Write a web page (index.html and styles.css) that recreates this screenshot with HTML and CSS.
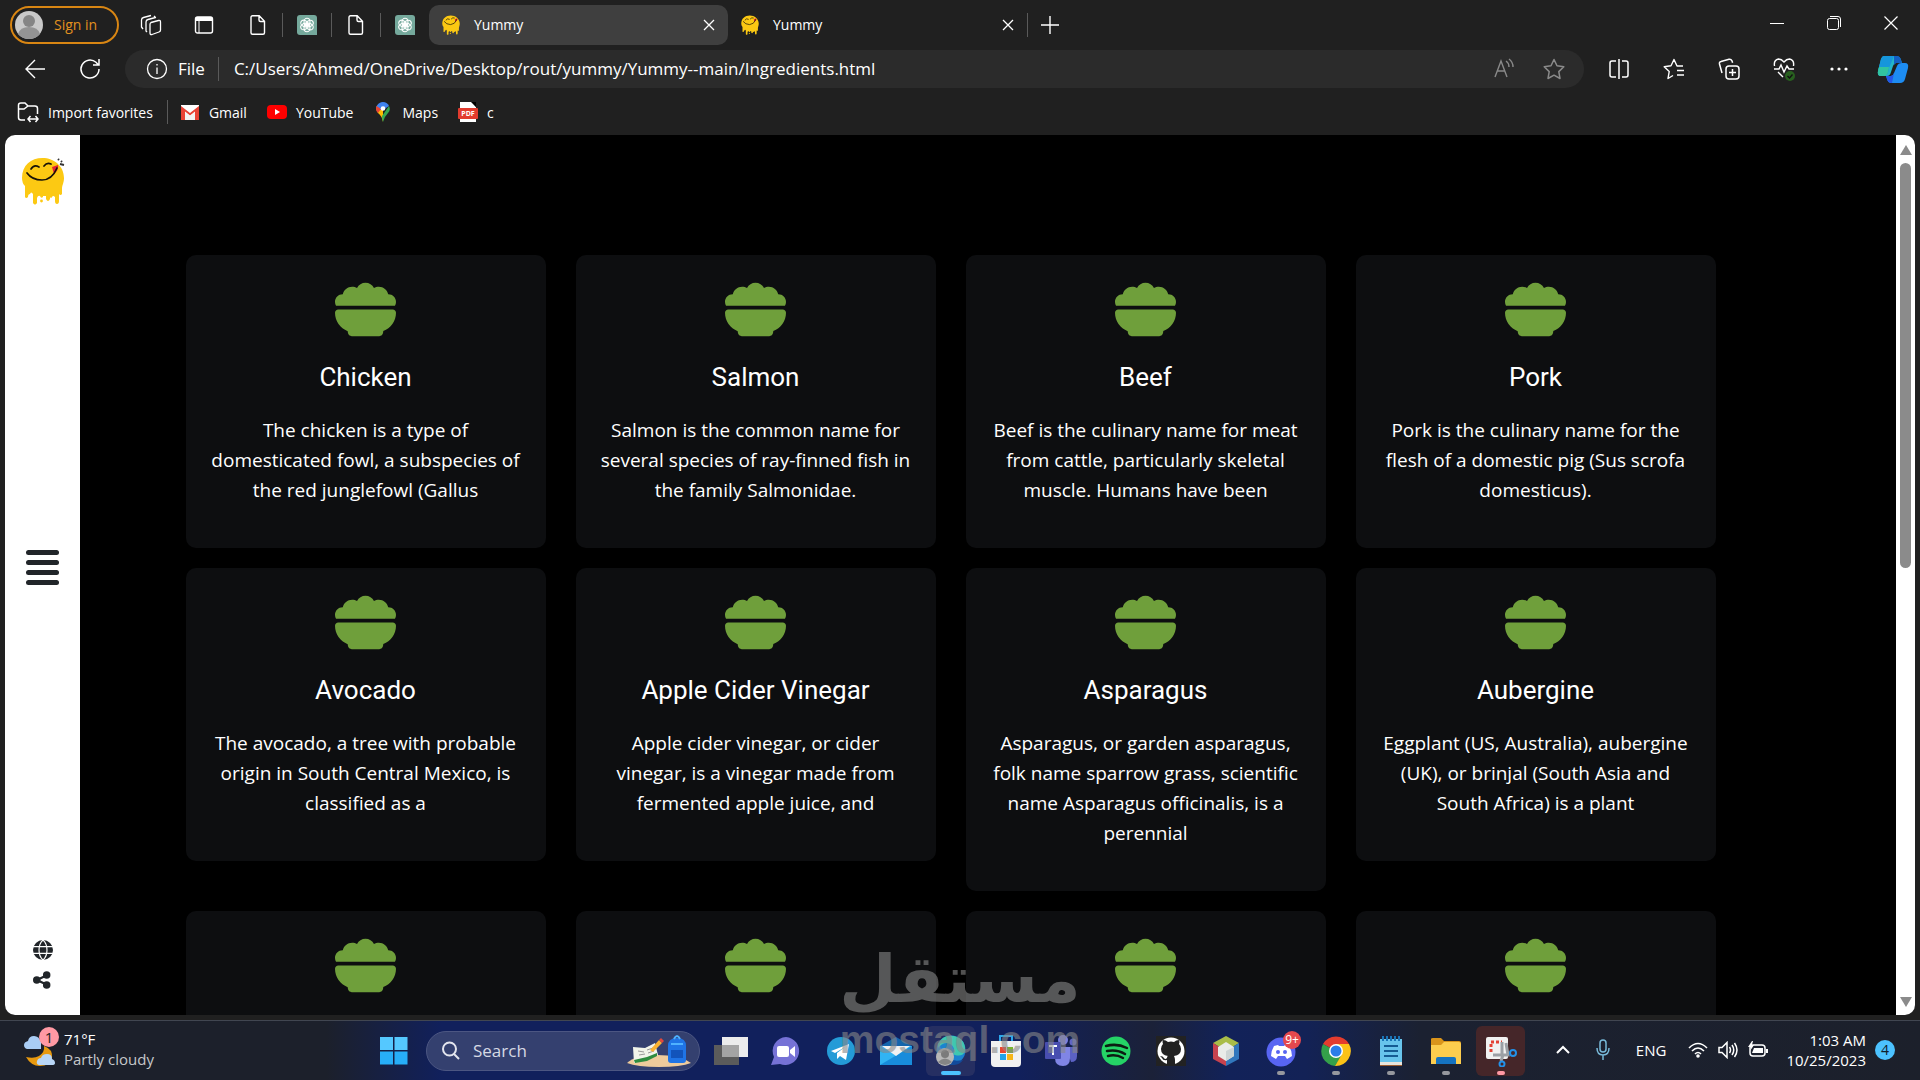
FILE: index.html
```
<!DOCTYPE html>
<html lang="en">

<head>
    <meta charset="UTF-8">
    <meta name="viewport" content="width=device-width, initial-scale=1.0">
    <link rel="stylesheet" href="styles.css">
    <title>Yummy</title>
</head>

<body>

    <!-- shared icons -->
    <svg class="sprite" aria-hidden="true">
        <symbol id="file" viewBox="0 0 20 20"><path d="M4.500 .8h6.700l5.300 5.400v11.500q0 1.500-1.500 1.500H4.500Q3 19.200 3 17.700V2.300Q3 .8 4.500 .8zM11 1v4q0 1.500 1.500 1.500h4" fill="none" stroke="#fff" stroke-width="1.400"/></symbol>
        <symbol id="gpt" viewBox="0 0 20 20"><path d="M3 0h14q3 0 3 3v17H3q-3 0-3-3V3q0-3 3-3z" fill="#75a99c"/><g fill="none" stroke="#fff" stroke-width="1.100"><ellipse cx="10" cy="7" rx="3" ry="3.800"/><ellipse cx="10" cy="7" rx="3" ry="3.800" transform="rotate(60 10 10)"/><ellipse cx="10" cy="7" rx="3" ry="3.800" transform="rotate(120 10 10)"/><ellipse cx="10" cy="7" rx="3" ry="3.800" transform="rotate(180 10 10)"/><ellipse cx="10" cy="7" rx="3" ry="3.800" transform="rotate(240 10 10)"/><ellipse cx="10" cy="7" rx="3" ry="3.800" transform="rotate(300 10 10)"/></g></symbol>
        <symbol id="yummy" viewBox="0 0 44 48"><path d="M1 21C1 8 10 1 21.500 1S43 9 43 21c0 5-2 7-2 11v5q-1.500 2-3 0v7q0 3-2 3t-2-3v-4q-2-2-3 0-1 2-2 0v2q-2 4-4 0v-3h-3v1q-2 2-3-1-2-1-3 2v5q-2 3-4 0v-9q-2-3-3 0-2 0-2 3-2 2-3 0V29Q1 26 1 21z" fill="#fcc913"/><circle cx="20.500" cy="44" r="1.400" fill="#fcc913"/><path d="M31 10l6-2q1 5-4 9z" fill="#e62332"/><path d="M6 16q5 7 15 7t15-12M10 12q3-5 8-2M23 9q3-4 7-2" fill="none" stroke="#171208" stroke-width="1.700" stroke-linecap="round"/><path d="M37 2l1 1M40 4l1 1M39 7l4 1" stroke="#333" stroke-width="2"/></symbol>
        <symbol id="close" viewBox="0 0 14 14"><path d="M2 2l10 10M12 2L2 12" stroke="#fff" stroke-width="1.300"/></symbol>
        <symbol id="bowl" viewBox="0 0 512 512"><path fill="#6f9f3b" d="M0 192c0-35.300 28.700-64 64-64h1.600C73 91.500 105.300 64 144 64c15 0 29 4.100 40.900 11.200C198.200 49.600 225.100 32 256 32s57.800 17.600 71.100 43.200C339 68.100 353 64 368 64c38.700 0 71 27.500 78.400 64h1.600c35.300 0 64 28.700 64 64 0 11.700-3.100 22.600-8.600 32H8.600C3.100 214.600 0 203.700 0 192zm0 91.400C0 268.300 12.300 256 27.400 256h457.200c15.100 0 27.400 12.300 27.400 27.400 0 70.500-44.400 130.700-106.700 154.100L403.500 452c-2 16-15.600 28-31.800 28H140.200c-16.100 0-29.800-12-31.800-28l-1.800-14.400C44.400 414.100 0 353.900 0 283.400z"/></symbol>
    </svg>

    <div class="browser">
        <header class="tabs">
            <button class="sign_in">
                <svg width="30" height="30" viewBox="0 0 30 30"><circle cx="15" cy="15" r="14" fill="#c9c9c9"/><circle cx="15" cy="11" r="6" fill="#858585"/><path d="M4 24q2-7 11-7t11 7q-4 5-11 5T4 24z" fill="#949494"/></svg>
                <span>Sign in</span>
            </button>
            <button class="icon_btn workspaces" aria-label="Workspaces"><svg width="22" height="22" viewBox="0 0 22 22" fill="none" stroke="#fff" stroke-width="1.300" stroke-linejoin="round"><path d="M11 8.500l7.500-2q2-.5 2 1.500v8q0 1.500-1.500 2l-7 2.500q-2 .5-2-1.500v-8.500q0-1.500 1-2zM7 18l-1-1V8q0-2 2-2.500L15.500 3.500 14 2M3 15l-1.500-2V6q0-2 2-2.500L11 1.500"/></svg></button>
            <button class="icon_btn tab_menu" aria-label="Tab actions"><svg width="20" height="20" viewBox="0 0 20 20"><rect x="1.500" y="2" width="17" height="16" rx="2" fill="none" stroke="#fff" stroke-width="1.400"/><path d="M2 2h16v4H2z" fill="#fff"/><path d="M5 6v12" stroke="#fff"/></svg></button>
            <div class="pinned">
                <button class="icon_btn" aria-label="File"><svg width="20" height="20"><use href="#file"/></svg></button>
                <i class="line"></i>
                <button class="icon_btn" aria-label="ChatGPT"><svg width="20" height="20"><use href="#gpt"/></svg></button>
                <i class="line"></i>
                <button class="icon_btn" aria-label="File"><svg width="20" height="20"><use href="#file"/></svg></button>
                <i class="line"></i>
                <button class="icon_btn" aria-label="ChatGPT"><svg width="20" height="20"><use href="#gpt"/></svg></button>
            </div>
            <div class="tab active">
                <svg width="20" height="20"><use href="#yummy"/></svg>
                <span>Yummy</span>
                <button class="icon_btn" aria-label="Close tab"><svg width="14" height="14"><use href="#close"/></svg></button>
            </div>
            <div class="tab">
                <svg width="20" height="20"><use href="#yummy"/></svg>
                <span>Yummy</span>
                <button class="icon_btn" aria-label="Close tab"><svg width="14" height="14"><use href="#close"/></svg></button>
            </div>
            <i class="line"></i>
            <button class="icon_btn new_tab" aria-label="New tab"><svg width="20" height="20" viewBox="0 0 20 20"><path d="M1 10h18M10 1v18" stroke="#fff" stroke-width="1.400"/></svg></button>
            <div class="window_btns">
                <button class="icon_btn" aria-label="Minimize"><svg width="14" height="14"><path d="M0 7.500h14" stroke="#fff"/></svg></button>
                <button class="icon_btn" aria-label="Restore"><svg width="14" height="14" fill="none" stroke="#fff"><rect x=".5" y="2.500" width="11" height="11" rx="2"/><path d="M3 .5h8q2.500 0 2.500 2.500v8"/></svg></button>
                <button class="icon_btn" aria-label="Close"><svg width="14" height="14"><path d="M.5 .5l13 13M13.500 .5l-13 13" stroke="#fff" stroke-width="1.200"/></svg></button>
            </div>
        </header>

        <div class="toolbar">
            <button class="icon_btn back" aria-label="Back"><svg width="22" height="20" viewBox="0 0 22 20" fill="none" stroke="#fff" stroke-width="1.400"><path d="M21 10H2M11 1L2 10l9 9"/></svg></button>
            <button class="icon_btn refresh" aria-label="Refresh"><svg width="22" height="22" viewBox="0 0 22 22" fill="none" stroke="#fff" stroke-width="1.500"><path d="M20 11a9 9 0 1 1-3-6.700L19.500 7M20 1v6h-6"/></svg></button>
            <div class="address">
                <svg width="22" height="22" viewBox="0 0 22 22" fill="none" stroke="#fff" stroke-width="1.300"><circle cx="11" cy="11" r="9.500"/><path d="M11 9.500V16M11 6v1.600"/></svg>
                <label for="url">File</label>
                <i class="line"></i>
                <input id="url" type="text" value="C:/Users/Ahmed/OneDrive/Desktop/rout/yummy/Yummy--main/Ingredients.html">
                <button class="icon_btn" aria-label="Read aloud"><svg width="22" height="22" viewBox="0 0 22 22" fill="none" stroke="#8a8a8a" stroke-width="1.400"><path d="M2 19L8 3l6 16M4 13h8M13 3q3 2 3 6M16 1q4 3 4 8"/></svg></button>
                <button class="icon_btn" aria-label="Add to favorites"><svg width="22" height="22" viewBox="0 0 22 22" fill="none" stroke="#8a8a8a" stroke-width="1.500" stroke-linejoin="round"><path d="M11 1.500l3 6.300 6.800 1-5 4.800 1.200 6.900-6-3.300-6 3.300 1.200-6.900-5-4.800 6.800-1z"/></svg></button>
            </div>
            <div class="tools">
                <button class="icon_btn" aria-label="Split screen"><svg width="22" height="22" viewBox="0 0 22 22" fill="none" stroke="#fff" stroke-width="1.500"><path d="M8 3H4Q2 3 2 5v12q0 2 2 2h4M14 3h4q2 0 2 2v12q0 2-2 2h-4M11 1v20"/></svg></button>
                <button class="icon_btn" aria-label="Favorites"><svg width="22" height="22" viewBox="0 0 22 22" fill="none" stroke="#fff" stroke-width="1.400" stroke-linejoin="round"><path d="M20 8h-6l-3-6.500-3 6.300-6.800 1 5 4.800L5 20.500l5-3M14 12.500h7M14 17h7"/></svg></button>
                <button class="icon_btn" aria-label="Collections"><svg width="22" height="22" viewBox="0 0 22 22" fill="none" stroke="#fff" stroke-width="1.500"><rect x="8" y="8" width="13" height="13" rx="3"/><path d="M14.500 11v7M11 14.500h7M4 15L1.500 6Q1 4 3 3.500l8-2.200q2-.4 3 1.500l.6 2"/></svg></button>
                <button class="icon_btn" aria-label="Browser essentials"><svg width="22" height="24" viewBox="0 0 22 24" fill="none" stroke="#fff" stroke-width="1.400"><path d="M1.500 9Q.5 3 5.500 2q3 0 5.500 3 2.500-3 5.500-3 5 1 4 7M1 12h5l2-4 3 7 3-6 2 3h5M5 15l5 5"/><circle cx="17" cy="19" r="5" fill="#28601f" stroke="none"/><path d="M14.500 19l2 2 3-3.500" stroke="#111"/></svg></button>
                <button class="icon_btn" aria-label="More"><svg width="22" height="22" viewBox="0 0 22 22" fill="#fff"><circle cx="4" cy="11" r="1.600"/><circle cx="11" cy="11" r="1.600"/><circle cx="18" cy="11" r="1.600"/></svg></button>
                <button class="icon_btn" aria-label="Copilot"><svg width="32" height="30" viewBox="0 0 32 30"><path d="M7 2h12q4 0 5 4l1 3h-6q-2 0-3 3l-2 6q-1 4-4 4H4q-4 0-3-5L4 5q1-3 3-3z" fill="#23b5c9"/><path d="M7 2h10L12 14q-1 8-4 8H4q-4 0-3-5L4 5q1-3 3-3z" fill="#1696dc"/><path d="M2 13h10l-1 5q-1 4-4 4H4q-4 0-3-5z" fill="#31c4a0"/><path d="M17 2h3q3 0 4 4l1 3h-6l-2 2z" fill="#125fc4"/><path d="M25 9h3q4 0 3 5l-3 11q-1 4-5 4H14q-3 0-4-4l-1-3h5q2 0 3-3l3-7q1-3 5-3z" fill="#1d8cf2"/><path d="M9 22h5q2 0 3-3l-2 10q-4 0-5-4z" fill="#2456e8"/></svg></button>
            </div>
        </div>

        <nav class="favorites">
            <a href="#"><svg width="22" height="22" viewBox="0 0 22 22" fill="none" stroke="#fff" stroke-width="1.500"><path d="M8 19H4q-2.500 0-2.500-2.500V4Q1.500 2 4 2h4l3 3h7q2.500 0 2.500 2.500V13M2 8h5l4-3M11 18h10M13.500 15L11 18l2.500 3M18.500 15l2.500 3-2.500 3"/></svg>Import favorites</a>
            <i class="line"></i>
            <a href="#"><svg width="20" height="20" viewBox="0 0 20 20"><path d="M1 3h18v15H1z" fill="#fff"/><path d="M1 18V4l9 7 9-7v14h-4V9.500L10 13.500 5 9.500V18z" fill="#e94235"/><path d="M5 10v8h10v-8l-5 4z" fill="#f3f3f3"/></svg>Gmail</a>
            <a href="#"><svg width="20" height="20" viewBox="0 0 20 20"><rect y="3" width="20" height="14" rx="4" fill="#f00"/><path d="M8 7l5 3-5 3z" fill="#fff"/></svg>YouTube</a>
            <a href="#"><svg width="20" height="20" viewBox="0 0 20 20"><path d="M10 20Q9 14 5 11 2 7 4 3.500L10 7z" fill="#fbbc04"/><path d="M4 3.500Q6 0 10 0t6 4l-6 4-6 0q-1-2 0-4.500z" fill="#3f83f0"/><path d="M16 4q2 4-1 7-4 4-5 9-1-3-1-6z" fill="#34a853"/><path d="M3.500 4L8 7l-3 4Q2 8 3.500 4z" fill="#ea4335"/><circle cx="10" cy="6.500" r="2.300" fill="#fff"/></svg>Maps</a>
            <a href="#"><svg width="20" height="20" viewBox="0 0 20 20"><path d="M2 0h12l4 5v15H2z" fill="#fff"/><path d="M13 0l5 5v-5z" fill="#000"/><rect y="6" width="20" height="11" rx="1" fill="#e23b2e"/><text x="10" y="14" class="pdf">PDF</text></svg>c</a>
        </nav>

        <div class="page">
            <aside class="side_nav">
                <a href="#" class="logo" aria-label="Yummy"><svg width="46" height="48"><use href="#yummy"/></svg></a>
                <button class="menu" aria-label="Open menu"><i></i><i></i><i></i><i></i></button>
                <div class="social">
                    <a href="#" aria-label="Website"><svg width="20" height="20" viewBox="0 0 512 512" fill="#212529"><circle cx="256" cy="256" r="256"/><path fill="none" stroke="#fff" stroke-width="30" d="M0 168h512M0 344h512M256 0C120 120 120 392 256 512M256 0c136 120 136 392 0 512"/></svg></a>
                    <a href="#" aria-label="Share"><svg width="20" height="20" viewBox="0 0 512 512"><path d="M370 130L100 256l270 126" fill="none" stroke="#212529" stroke-width="58"/><g fill="#212529"><circle cx="350" cy="128" r="96"/><circle cx="96" cy="256" r="96"/><circle cx="350" cy="384" r="96"/></g></svg></a>
                </div>
            </aside>

            <main class="main">
                <div class="items">
                    <div class="card">
                        <svg class="bowl"><use href="#bowl"/></svg>
                        <h3>Chicken</h3>
                        <p>The chicken is a type of domesticated fowl, a subspecies of the red junglefowl (Gallus</p>
                    </div>
                    <div class="card">
                        <svg class="bowl"><use href="#bowl"/></svg>
                        <h3>Salmon</h3>
                        <p>Salmon is the common name for several species of ray-finned fish in the family Salmonidae.</p>
                    </div>
                    <div class="card">
                        <svg class="bowl"><use href="#bowl"/></svg>
                        <h3>Beef</h3>
                        <p>Beef is the culinary name for meat from cattle, particularly skeletal muscle. Humans have been</p>
                    </div>
                    <div class="card">
                        <svg class="bowl"><use href="#bowl"/></svg>
                        <h3>Pork</h3>
                        <p>Pork is the culinary name for the flesh of a domestic pig (Sus scrofa domesticus).</p>
                    </div>
                    <div class="card">
                        <svg class="bowl"><use href="#bowl"/></svg>
                        <h3>Avocado</h3>
                        <p>The avocado, a tree with probable origin in South Central Mexico, is classified as a</p>
                    </div>
                    <div class="card">
                        <svg class="bowl"><use href="#bowl"/></svg>
                        <h3>Apple Cider Vinegar</h3>
                        <p>Apple cider vinegar, or cider vinegar, is a vinegar made from fermented apple juice, and</p>
                    </div>
                    <div class="card">
                        <svg class="bowl"><use href="#bowl"/></svg>
                        <h3>Asparagus</h3>
                        <p>Asparagus, or garden asparagus, folk name sparrow grass, scientific name Asparagus officinalis, is a perennial</p>
                    </div>
                    <div class="card">
                        <svg class="bowl"><use href="#bowl"/></svg>
                        <h3>Aubergine</h3>
                        <p>Eggplant (US, Australia), aubergine (UK), or brinjal (South Asia and South Africa) is a plant</p>
                    </div>
                    <div class="card"><svg class="bowl"><use href="#bowl"/></svg></div>
                    <div class="card"><svg class="bowl"><use href="#bowl"/></svg></div>
                    <div class="card"><svg class="bowl"><use href="#bowl"/></svg></div>
                    <div class="card"><svg class="bowl"><use href="#bowl"/></svg></div>
                </div>
            </main>

            <div class="scrollbar">
                <svg width="12" height="10"><path d="M6 0l6 10H0z" fill="#8b8b8b"/></svg>
                <div class="track"><div class="thumb"></div></div>
                <svg width="12" height="10"><path d="M0 0h12L6 10z" fill="#8b8b8b"/></svg>
            </div>
        </div>
    </div>

    <footer class="taskbar">
        <div class="weather">
            <svg width="34" height="36" viewBox="0 0 34 36"><path d="M3 18q-3-1-3-4t4-4q1-5 6-5t7 6v7z" fill="#a9cdf5"/><path d="M2 26q8 2 13-1 6-4 5-10 9 3 8 12-2 8-12 8-9 0-14-9z" fill="#e8990f"/><path d="M15 34q-3-1-2-4 1-3 4-3 1-4 6-4t5 5q3 1 3 4 0 2-3 2z" fill="#b8d6f7"/></svg>
            <b>1</b>
            <div>
                <p>71°F</p>
                <p class="muted">Partly cloudy</p>
            </div>
        </div>

        <div class="apps">
            <button aria-label="Start"><svg width="30" height="30" viewBox="0 0 30 30"><path d="M1 1h13v13H1zM15.500 1h13v13h-13z" fill="#55c8ff"/><path d="M1 15.500h13v13H1zM15.500 15.500h13v13h-13z" fill="#27aef8"/></svg></button>
            <div class="search">
                <svg width="20" height="20" viewBox="0 0 20 20" fill="none" stroke="#e3e5ee" stroke-width="2"><circle cx="8.500" cy="8" r="6.500"/><path d="M13 13l5 5"/></svg>
                <input type="text" placeholder="Search" aria-label="Search">
                <svg width="66" height="32" viewBox="0 0 66 32"><path d="M1 28q8-8 30-8t34 8q-10 4-32 4T1 28z" fill="#eecb9c"/><path d="M7 12l12 1 10-5 3 12-11 5-13 3z" fill="#f1f4ea"/><path d="M8 25l13-3 10-4v3l-10 5-12 2z" fill="#2e8c3f"/><path d="M12 16l6 1M13 20l6-1M21 15l6-2M22 18l6-2" stroke="#999"/><path d="M24 15L33 5l3 3-9 9z" fill="#f9b233"/><path d="M33 5l2-2 3 3-2 2z" fill="#e2483d"/><path d="M42 11q0-8 9-8t9 8v14q0 3-3 3H45q-3 0-3-3z" fill="#1f74e6"/><path d="M45 15h12v8H45z" fill="#1254bb"/><path d="M45 9h12M48 4q3-6 6 0" stroke="#4fb2ff" stroke-width="2" fill="none"/></svg>
            </div>
            <button aria-label="Task view"><svg width="36" height="32" viewBox="0 0 36 32"><path d="M1 10h25v20H1z" fill="#5b5b5b"/><path d="M9 2h26v20H9z" fill="#ececec"/><path d="M9 10h17v12H9z" fill="#a4a4a4"/></svg></button>
            <button aria-label="Chat"><svg width="32" height="32" viewBox="0 0 32 32"><path d="M16 2a14 14 0 1 1-6 27l-9 1 3-8A14 14 0 0 1 16 2z" fill="#7672d6"/><rect x="7" y="11" width="12" height="11" rx="2" fill="#fff"/><path d="M20 15l5-4v11l-5-4z" fill="#fff"/></svg></button>
            <button aria-label="Telegram"><svg width="32" height="32" viewBox="0 0 32 32"><circle cx="16" cy="16" r="14" fill="#249bd7"/><path d="M6 16l18-7-3 16-6-4-3 3v-6l8-6-10 6z" fill="#fff"/></svg></button>
            <button aria-label="Mail"><svg width="34" height="32" viewBox="0 0 34 32"><path d="M1 11L17 2l16 9z" fill="#1465ad"/><path d="M1 11h32v19H1z" fill="#31b4f3"/><path d="M1 30L33 11v19z" fill="#188cdb"/><path d="M3 11h28l-14 10z" fill="#f1f1f1"/></svg></button>
            <button class="open current" aria-label="Edge"><svg width="34" height="34" viewBox="0 0 34 34"><circle cx="17" cy="16" r="14.500" fill="#1c83cf"/><path d="M4 10Q9 0 20 2q12 3 11 15-2 6-10 4-3-1-1-4 0-7-7-8-5 0-9 5z" fill="#3fc7b0"/><path d="M14 18q-1 11 15 8-5 7-14 4z" fill="#124a9b"/><circle cx="11" cy="23" r="9" fill="#b7b7b7"/><circle cx="11" cy="20" r="4" fill="#7b7b7b"/><path d="M4 28q7-7 14 0-7 6-14 0z" fill="#858585"/></svg></button>
            <button aria-label="Store"><svg width="32" height="34" viewBox="0 0 32 34"><path d="M10 8V2h12v6" fill="none" stroke="#2da7ec" stroke-width="2"/><path d="M1 7h30v22q0 4-4 4H5q-4 0-4-4z" fill="#f1f1f1"/><path d="M10 13h6v6h-6z" fill="#e8482e"/><path d="M17 13h6v6h-6z" fill="#78b52e"/><path d="M10 20h6v6h-6z" fill="#23a3e7"/><path d="M17 20h6v6h-6z" fill="#f6b518"/></svg></button>
            <button aria-label="Teams"><svg width="34" height="34" viewBox="0 0 34 34"><circle cx="19" cy="6" r="5" fill="#7b80e0"/><circle cx="29" cy="8" r="3.500" fill="#6065c6"/><path d="M22 13h11v9q0 6-6 6z" fill="#5b61c4"/><path d="M11 13h15v11q0 8-7 8-8 0-8-8z" fill="#8085e5"/><rect x="1" y="8" width="16" height="17" rx="1" fill="#484eb0"/><path d="M5 12h8M9 12v9" stroke="#fff" stroke-width="2"/></svg></button>
            <button aria-label="Spotify"><svg width="32" height="32" viewBox="0 0 32 32"><circle cx="16" cy="16" r="14.500" fill="#25d366"/><path d="M6 11q11-3 21 2M7 16q10-2 18 3M8 21q8-2 15 2" fill="none" stroke="#0c1c12" stroke-width="2.500" stroke-linecap="round"/></svg></button>
            <button aria-label="GitHub"><svg width="32" height="32" viewBox="0 0 32 32"><path d="M1 1h30v30H1z" fill="#222"/><circle cx="16" cy="16" r="13.500" fill="#fff"/><path d="M12 30v-5q-4 1-5-2l-2-2q3 0 4 2 1 2 3 0 0-2 1-2-7-1-7-7 0-3 2-5-1-2 0-4 3 0 5 2 3-1 6 0 2-2 5-2 1 2 0 4 2 2 2 5 0 6-7 7 1 2 1 4v5z" fill="#222"/></svg></button>
            <button aria-label="NetBeans"><svg width="30" height="32" viewBox="0 0 30 32"><path d="M15 1l13 7-13 8L2 8z" fill="#a9bd49"/><path d="M2 8l13 8v15L2 24z" fill="#c7424e"/><path d="M28 8l-13 8v15l13-7z" fill="#3177bd"/><path d="M15 7l8 5v9l-8 5-8-5v-9z" fill="#e9ece9"/><path d="M15 16l8-4v9l-8 5z" fill="#cdd5d5"/></svg></button>
            <button class="open" aria-label="Discord"><svg width="32" height="32" viewBox="0 0 32 32"><circle cx="16" cy="17" r="14.500" fill="#5865f2"/><path d="M9 11l4-1 1 1h5l1-1 4 1q3 5 3 10-3 2-5 3l-2-3h-7l-2 3-5-3q0-5 3-10z" fill="#fff"/><circle cx="13" cy="17" r="2" fill="#5865f2"/><circle cx="20" cy="17" r="2" fill="#5865f2"/></svg><b>9+</b></button>
            <button class="open" aria-label="Chrome"><svg width="32" height="32" viewBox="0 0 32 32"><path d="M16 16L3 9a15 15 0 0 1 26 0z" fill="#e43c2e"/><path d="M16 16L3 9a15 15 0 0 0 12 22l7-11z" fill="#34a04a"/><path d="M16 9h13a15 15 0 0 1-14 22l7-12z" fill="#fbc217"/><circle cx="16" cy="16" r="7" fill="#fff"/><circle cx="16" cy="16" r="5.500" fill="#2b7de9"/></svg></button>
            <button class="open" aria-label="Notepad"><svg width="26" height="32" viewBox="0 0 26 32"><path d="M2 4h22v25H2z" fill="#68c4ec"/><path d="M2 27h22v3H2z" fill="#e8e4dc"/><path d="M2 30h22v1H2z" fill="#9c5c2f"/><path d="M6 11h14M6 16h14M6 21h14" stroke="#155b93" stroke-width="2"/><path d="M5 1v5M9 1v5M13 1v5M17 1v5M21 1v5" stroke="#1a75b8" stroke-width="2"/></svg></button>
            <button class="open" aria-label="File Explorer"><svg width="32" height="32" viewBox="0 0 32 32"><path d="M1 4q0-1 2-1h8l3 3h15q2 0 2 2v7H1z" fill="#d9941b"/><path d="M1 10h10l3-3h15q2 0 2 2v20H1z" fill="#fccd4e"/><path d="M6 29v-5q0-2 2-2h16q2 0 2 2v5z" fill="#1573c0"/></svg></button>
            <button class="open snip" aria-label="Snipping Tool"><svg width="32" height="32" viewBox="0 0 32 32"><rect x="1" y="2" width="22" height="22" rx="2" fill="#f1f1f1"/><path d="M6 17V7h11" fill="none" stroke="#e34234" stroke-width="3" stroke-dasharray="3 2"/><path d="M17 7v14M8 20h15l-2-12M18 20l-2 6" fill="none" stroke="#9ca0a5" stroke-width="3"/><circle cx="28" cy="18" r="3" fill="none" stroke="#2391e8" stroke-width="2"/><circle cx="17" cy="29" r="2.500" fill="none" stroke="#2391e8" stroke-width="2"/></svg></button>
        </div>

        <div class="tray">
            <button aria-label="Hidden icons"><svg width="14" height="10"><path d="M1 8l6-6 6 6" fill="none" stroke="#fff" stroke-width="2"/></svg></button>
            <button aria-label="Microphone"><svg width="14" height="22" fill="none" stroke="#78b9d9" stroke-width="1.500"><rect x="4" y="1" width="6" height="12" rx="3"/><path d="M1 9q0 7 6 7t6-7M7 16v5"/></svg></button>
            <button class="lang">ENG</button>
            <button class="status" aria-label="Network, volume and battery">
                <svg width="20" height="18" fill="none" stroke="#fff" stroke-width="1.600"><path d="M1 7q9-9 18 0M4 10q6-6 12 0M7 13q3-3 6 0"/><circle cx="10" cy="15" r="1" fill="#fff"/></svg>
                <svg width="20" height="18" fill="none" stroke="#fff" stroke-width="1.500"><path d="M1 6.500h3l5-5v15l-5-5H1zM11.500 6q2 3 0 6M14 4q3.500 5 0 10M16.500 2q5 7 0 14"/></svg>
                <svg width="20" height="18"><rect x="2" y="4" width="15" height="11" rx="3" fill="none" stroke="#fff" stroke-width="1.500"/><path d="M6 7h9v5H4zM18 8h2v4h-2z" fill="#fff"/><path d="M4 0L0 6h3l-1 4 4-6H4l1-4z" fill="#fff"/></svg>
            </button>
            <div class="clock">
                <p>1:03 AM</p>
                <p>10/25/2023</p>
            </div>
            <span class="notes">4</span>
        </div>
    </footer>

    <div class="watermark">
        <span class="arabic" lang="ar" dir="rtl">مستقل</span>
        <span class="latin">mostaql.com</span>
    </div>

</body>

</html>
```
FILE: styles.css
```
* {
    margin: 0px;
    padding: 0px;
    box-sizing: border-box;
}

body {
    height: 100vh;
    display: flex;
    flex-direction: column;
    overflow: hidden;
    background: #202020;
    color: #ffffff;
    font-family: "Open Sans", "Noto Sans", sans-serif;
    font-size: 14px;
}

a {
    color: inherit;
    text-decoration: none;
}

button,
input {
    border: none;
    outline: none;
    background: none;
    color: inherit;
    font: inherit;
}

svg {
    display: block;
    flex: none;
}

.sprite {
    position: absolute;
    width: 0px;
    height: 0px;
}

.icon_btn {
    display: flex;
    align-items: center;
    justify-content: center;
    flex: none;
}

.line {
    width: 1px;
    height: 24px;
    background: #5a5a5a;
    flex: none;
}

/* browser */
.browser {
    flex: 1;
    min-height: 0px;
    display: flex;
    flex-direction: column;
    padding: 0px 5px 5px;
}

.tabs {
    height: 50px;
    display: flex;
    align-items: center;
    padding-left: 5px;
}

.sign_in {
    display: flex;
    align-items: center;
    gap: 10px;
    width: 109px;
    height: 38px;
    padding-left: 2px;
    border: 2px solid #d98613;
    border-radius: 19px;
    color: #e2901f;
}

.sign_in span,
.tab span {
    padding-bottom: 2px;
}

.workspaces {
    margin-left: 21px;
}

.tab_menu {
    margin-left: 32px;
}

.pinned {
    display: flex;
    align-items: center;
    gap: 14px;
    margin: 0px 14px 0px 34px;
}

.tab {
    width: 299px;
    height: 40px;
    display: flex;
    align-items: center;
    gap: 13px;
    padding: 0px 12px;
    border-radius: 10px;
}

.tab.active {
    background: #3f3f3f;
}

.tab .icon_btn {
    margin-left: auto;
}

.new_tab {
    margin-left: 12px;
}

.window_btns {
    display: flex;
    gap: 43px;
    margin-left: auto;
    padding: 0px 17px 4px 0px;
}

.toolbar {
    display: flex;
    align-items: center;
    height: 38px;
}

.back {
    margin-left: 19px;
}

.refresh {
    margin: 0px 24px 0px 33px;
}

.address {
    flex: 1;
    display: flex;
    align-items: center;
    height: 38px;
    padding: 0px 19px 0px 21px;
    border-radius: 19px;
    background: #2b2b2b;
    font-size: 17px;
}

.address label,
.address input {
    padding-bottom: 2px;
}

.address label {
    margin: 0px 13px 0px 10px;
}

.address input {
    flex: 1;
    min-width: 0px;
    margin-left: 15px;
}

.address .icon_btn {
    margin-left: 28px;
}

.tools {
    display: flex;
    align-items: center;
    gap: 33px;
    padding: 0px 6px 0px 24px;
}

.tools .icon_btn:last-child {
    margin-left: -6px;
}

.favorites {
    height: 47px;
    display: flex;
    align-items: center;
    gap: 20px;
    padding: 1px 0px 0px 12px;
}

.favorites a {
    display: flex;
    align-items: center;
    gap: 9px;
}

.favorites .line {
    margin: 0px -8px 0px -6px;
}

.pdf {
    fill: #ffffff;
    font-size: 7px;
    font-weight: 700;
    text-anchor: middle;
}

/* page */
.page {
    flex: 1;
    min-height: 0px;
    display: flex;
    position: relative;
    border-radius: 10px;
    overflow: hidden;
    background: #000000;
}

.side_nav {
    position: absolute;
    top: 0px;
    bottom: 0px;
    left: 0px;
    width: 75px;
    display: flex;
    flex-direction: column;
    align-items: center;
    justify-content: space-between;
    padding: 22px 0px 25px;
    background: #ffffff;
}

.logo {
    height: 48px;
}

.menu {
    width: 33px;
    display: flex;
    flex-direction: column;
    gap: 5px;
    margin-bottom: 10px;
}

.menu i {
    height: 5px;
    border-radius: 3px;
    background: #212529;
}

.social {
    display: flex;
    flex-direction: column;
    gap: 10px;
}

.main {
    flex: 1;
    padding: 120px 0px 0px;
    overflow: hidden;
}

.items {
    max-width: 1530px;
    margin: 0px auto;
    display: grid;
    grid-template-columns: repeat(4, 1fr);
    align-items: start;
    gap: 20px 30px;
}

.card {
    min-height: 293px;
    padding: 24px 20px 43px;
    border-radius: 10px;
    background: #0d0e10;
    text-align: center;
}

.bowl {
    width: 61px;
    height: 61px;
    margin: 0px auto;
}

.card h3 {
    margin: 20px 0px 21px;
    font-family: Roboto, sans-serif;
    font-size: 26px;
    font-weight: 400;
    line-height: 34px;
}

.card p {
    font-size: 19px;
    line-height: 30px;
}

.scrollbar {
    width: 19px;
    display: flex;
    flex-direction: column;
    align-items: center;
    padding: 10px 0px 8px;
    background: #ffffff;
}

.track {
    flex: 1;
    width: 11px;
    padding: 8px 0px;
}

.thumb {
    height: 49%;
    border-radius: 6px;
    background: #8b8b8b;
}

/* taskbar */
.taskbar {
    height: 60px;
    display: flex;
    align-items: center;
    border-top: 1px solid #414651;
    background: linear-gradient(90deg, #1c202b 17%, #11205c 23%, #11205c 53%, #1b2138 60%, #122259 64%, #132256 68%, #1b2131 74%, #1c202b);
    font-size: 15px;
}

.weather {
    flex: 1;
    display: flex;
    align-items: center;
    gap: 6px;
    position: relative;
    padding: 0px 0px 4px 24px;
    line-height: 20px;
}

.weather b {
    position: absolute;
    left: 39px;
    top: -2px;
    width: 20px;
    height: 20px;
    border-radius: 50%;
    background: #ff99a4;
    color: #222222;
    font-weight: 400;
    text-align: center;
}

.muted {
    color: #c5c7ca;
}

.apps {
    display: flex;
    align-items: center;
}

.apps button {
    width: 55px;
    height: 50px;
    display: flex;
    align-items: center;
    justify-content: center;
    position: relative;
    border-radius: 6px;
}

.search {
    width: 274px;
    height: 40px;
    display: flex;
    align-items: center;
    gap: 12px;
    margin: 0px 3px 0px 5px;
    padding: 0px 7px 0px 14px;
    border: 1px solid #4c5682;
    border-radius: 20px;
    background: #34406f;
    font-size: 17px;
}

.search input {
    flex: 1;
    min-width: 0px;
}

.search input::placeholder {
    color: #d6d9e4;
}

.apps .open::after {
    content: "";
    position: absolute;
    bottom: 1px;
    width: 8px;
    height: 4px;
    border-radius: 2px;
    background: #96989e;
}

.apps .current {
    width: 49px;
    margin: 0px 3px;
    background: #262f62;
}

.apps .current::after {
    width: 20px;
    background: #4cc2ff;
}

.apps .snip {
    width: 49px;
    margin: 0px 3px;
    background: #452629;
}

.apps .snip::after {
    background: #ff99a4;
}

.apps b {
    position: absolute;
    top: 5px;
    right: 7px;
    width: 18px;
    height: 18px;
    border-radius: 50%;
    background: #e5484d;
    font-size: 12px;
    font-weight: 400;
    line-height: 18px;
    text-align: center;
}

.tray {
    width: 392px;
    display: flex;
    align-items: center;
    justify-content: flex-end;
    padding: 0px 25px 2px 0px;
}

.tray button {
    margin-right: 26px;
}

.tray .lang {
    margin-right: 22px;
}

.tray .status {
    display: flex;
    gap: 10px;
    margin-right: 18px;
}

.clock {
    line-height: 20px;
    text-align: right;
}

.notes {
    width: 20px;
    height: 20px;
    margin-left: 9px;
    border-radius: 50%;
    background: #4cc2ff;
    color: #10202c;
    font-size: 14px;
    line-height: 20px;
    text-align: center;
}

/* watermark over the page */
.watermark {
    position: absolute;
    left: 50%;
    bottom: 20px;
    transform: translateX(-50%);
    display: flex;
    flex-direction: column;
    align-items: center;
    color: #888888;
    opacity: 0.6;
    pointer-events: none;
}

.arabic {
    font-family: "DejaVu Sans", sans-serif;
    font-size: 66px;
    font-weight: 700;
    line-height: 80px;
}

.latin {
    font-family: "Liberation Sans", sans-serif;
    font-size: 39px;
    font-weight: 700;
    line-height: 40px;
}
```
